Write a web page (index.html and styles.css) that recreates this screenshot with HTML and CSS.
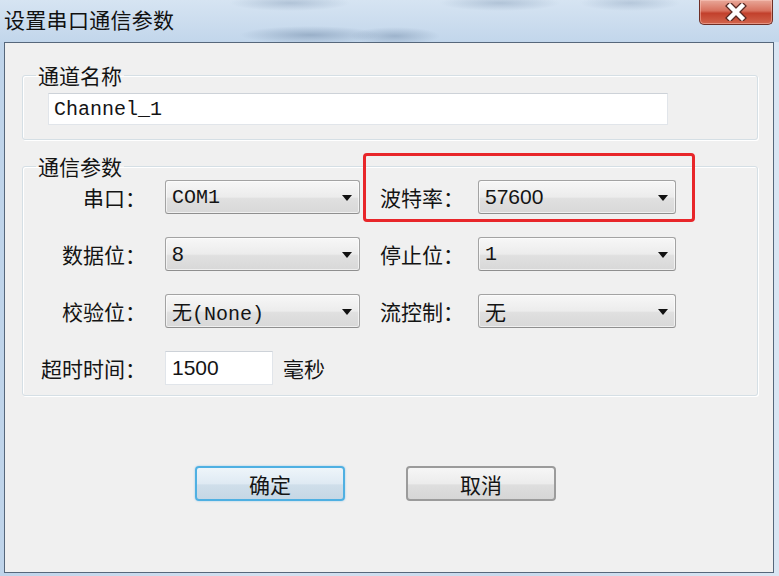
FILE: index.html
```html
<!DOCTYPE html>
<html lang="zh-CN">
<head>
    <meta charset="UTF-8">
    <meta name="viewport" content="width=device-width, initial-scale=1.0">
    <title>设置串口通信参数</title>
    <link rel="stylesheet" href="styles.css">
</head>
<body>
    <div class="window">
        <div class="titlebar">
            <span class="title">设置串口通信参数</span>
            <div class="close">
                <svg width="22" height="18" viewBox="0 0 22 18">
                    <path d="M5 3 L17 15 M17 3 L5 15" stroke="#5a2a24" stroke-width="7" stroke-linecap="square"/>
                    <path d="M5 3 L17 15 M17 3 L5 15" stroke="#ffffff" stroke-width="4.4" stroke-linecap="square"/>
                </svg>
            </div>
        </div>

        <div class="client">
            <fieldset class="group group-name">
                <legend>通道名称</legend>
                <input class="text-input name-input" type="text" value="Channel_1">
            </fieldset>

            <fieldset class="group group-params">
                <legend>通信参数</legend>
                <div class="param-grid">
                    <label class="lbl lbl-left">串口：</label>
                    <div class="combo"><span class="mono">COM1</span><i class="arrow"></i></div>
                    <label class="lbl lbl-right">波特率：</label>
                    <div class="combo"><span class="sans">57600</span><i class="arrow"></i></div>

                    <label class="lbl lbl-left">数据位：</label>
                    <div class="combo"><span class="sans">8</span><i class="arrow"></i></div>
                    <label class="lbl lbl-right">停止位：</label>
                    <div class="combo"><span class="mono">1</span><i class="arrow"></i></div>

                    <label class="lbl lbl-left">校验位：</label>
                    <div class="combo"><span class="mono">无(None)</span><i class="arrow"></i></div>
                    <label class="lbl lbl-right">流控制：</label>
                    <div class="combo"><span class="cjk">无</span><i class="arrow"></i></div>

                    <label class="lbl lbl-left">超时时间：</label>
                    <div class="timeout">
                        <input class="text-input timeout-input" type="text" value="1500">
                        <span class="unit">毫秒</span>
                    </div>
                </div>
            </fieldset>

            <div class="actions">
                <button class="btn btn-default">确定</button>
                <button class="btn">取消</button>
            </div>

            <!-- red annotation around the baud rate -->
            <div class="highlight"></div>
        </div>
    </div>
</body>
</html>
```

FILE: styles.css
```css
html, body {
    margin: 0;
    padding: 0;
}

body {
    width: 779px;
    height: 576px;
    overflow: hidden;
    font-family: "Noto Sans CJK SC", sans-serif;
    color: #141414;
}

.window {
    width: 779px;
    height: 576px;
    display: flex;
    flex-direction: column;
    box-sizing: border-box;
    background: linear-gradient(to right, #bfd4ea, #d3e1f0 35%, #c7d9ec 65%, #d9e6f3);
}

.titlebar {
    height: 42px;
    display: flex;
    justify-content: space-between;
    align-items: flex-start;
    background:
        radial-gradient(ellipse 70px 9px at 310px 35px, rgba(110, 135, 165, 0.5), transparent),
        radial-gradient(ellipse 45px 9px at 395px 36px, rgba(110, 135, 165, 0.45), transparent),
        radial-gradient(ellipse 60px 8px at 290px 3px, rgba(110, 135, 165, 0.35), transparent),
        radial-gradient(ellipse 60px 8px at 500px 3px, rgba(110, 135, 165, 0.35), transparent),
        radial-gradient(ellipse 50px 8px at 630px 3px, rgba(110, 135, 165, 0.3), transparent),
        linear-gradient(to bottom, #d6e4f2, #c2d6eb);
}

.title {
    margin: 6px 0 0 4px;
    font-size: 21px;
    line-height: 26px;
    letter-spacing: 0.3px;
    color: #111111;
}

.close {
    width: 74px;
    height: 25px;
    margin-right: 6px;
    box-sizing: border-box;
    border: 1px solid #6e2e25;
    border-top: none;
    border-radius: 0 0 5px 5px;
    background: linear-gradient(to bottom, #e9a899, #d7705d 45%, #c2402c 55%, #d2644c);
    box-shadow: inset 0 0 0 1px rgba(255, 210, 200, 0.45);
    display: flex;
    justify-content: center;
    align-items: center;
}

.client {
    position: relative;
    flex: 1;
    margin: 0 5px 3px 4px;
    border: 1px solid #56677b;
    background-color: #f0f0f0;
}

.group {
    margin: 0 15px 0 17px;
    padding: 0;
    border: 1px solid #d5dfe5;
    border-radius: 3px;
    box-shadow: inset 1px 1px 0 #ffffff, 1px 1px 0 #ffffff;
    min-width: 0;
}

.group legend {
    margin-left: 13px;
    padding: 0 2px;
    font-size: 21px;
    line-height: 26px;
    color: #141414;
}

.group-name {
    margin-top: 19px;
    padding: 5px 0 14px 0;
}

.text-input {
    box-sizing: border-box;
    height: 32px;
    border: 1px solid #e1e5ea;
    border-top-color: #cdd2d8;
    background: #ffffff;
    outline: none;
    margin: 0;
    color: #141414;
}

.name-input {
    width: 620px;
    margin-left: 25px;
    padding: 0 5px;
    font-family: "Liberation Mono", monospace;
    font-size: 20px;
}

.group-params {
    margin-top: 13px;
    padding: 1px 0 10px 0;
}

.param-grid {
    display: grid;
    grid-template-columns: 142px 195px 118px 198px;
    grid-auto-rows: 34px;
    row-gap: 23px;
    align-items: center;
}

.lbl {
    text-align: right;
    font-size: 21px;
    line-height: 34px;
    white-space: nowrap;
}

.lbl-left {
    padding-right: 19px;
}

.lbl-right {
    padding-right: 14px;
}

.combo {
    position: relative;
    height: 34px;
    box-sizing: border-box;
    border: 1px solid #a3a3a3;
    border-bottom-color: #8f8f8f;
    border-radius: 3px;
    background: linear-gradient(to bottom, #f7f7f7, #ececec 50%, #e0e0e0 55%, #d8d8d8);
    box-shadow: inset 0 0 0 1px rgba(255, 255, 255, 0.6);
    display: flex;
    align-items: center;
    padding-left: 6px;
}

.mono {
    font-family: "Liberation Mono", "Noto Sans CJK SC", monospace;
    font-size: 20px;
}

.sans {
    font-family: "Liberation Sans", sans-serif;
    font-size: 21px;
}

.cjk {
    font-size: 21px;
}

.arrow {
    position: absolute;
    right: 7px;
    top: 14px;
    width: 0;
    height: 0;
    border-left: 5px solid transparent;
    border-right: 5px solid transparent;
    border-top: 6px solid #111111;
}

.timeout {
    grid-column: span 3;
    display: flex;
    align-items: center;
    gap: 10px;
}

.timeout-input {
    width: 108px;
    height: 34px;
    padding: 0 6px;
    font-family: "Liberation Sans", sans-serif;
    font-size: 21px;
}

.unit {
    font-size: 21px;
}

.actions {
    display: flex;
    gap: 61px;
    margin-top: 70px;
    padding-left: 190px;
}

.btn {
    width: 150px;
    height: 35px;
    box-sizing: border-box;
    border: 2px solid #9b9b9b;
    border-radius: 4px;
    background: linear-gradient(to bottom, #f6f6f6, #ececec 50%, #dedede 55%, #d6d6d6);
    font-family: "Noto Sans CJK SC", sans-serif;
    font-size: 21px;
    line-height: 28px;
    color: #141414;
    padding: 0;
}

.btn-default {
    border-color: #4fb0e2;
    background: linear-gradient(to bottom, #eef5fa, #dfeaf3 50%, #cfdeea 55%, #c6d7e5);
    box-shadow: 0 0 2px rgba(80, 170, 230, 0.6);
}

.highlight {
    position: absolute;
    left: 358px;
    top: 110px;
    width: 332px;
    height: 69px;
    box-sizing: border-box;
    border: 3px solid #e8262a;
    border-radius: 4px;
}
```
